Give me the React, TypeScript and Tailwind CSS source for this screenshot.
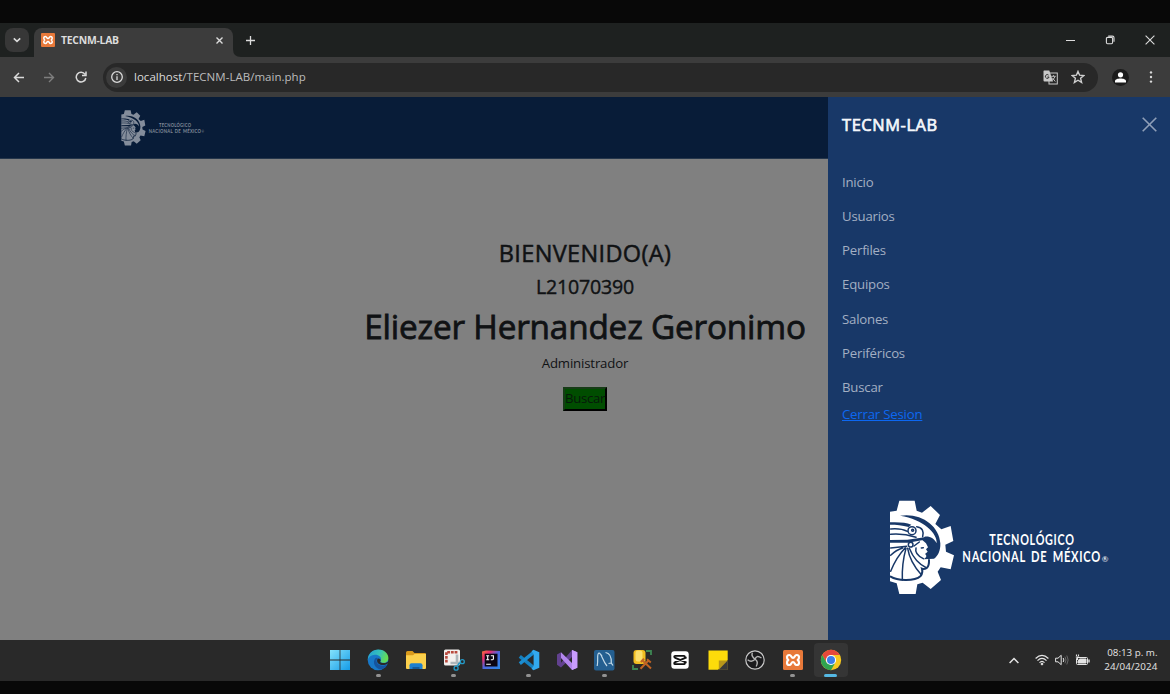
import type { ReactNode } from 'react';

function GearLogo({ className }: { className: string }) {
  return (
    <svg className={`overflow-visible ${className}`} viewBox="60 60 660 285" fill="none">
      <path
        fill="currentColor"
        d="M60 95 L80 92 L88 62 H134 L140 92 L156 98 L182 78 L210 105 L196 132 L214 148 L242 138 L250 183 L226 194 L228 215 L252 226 L242 268 L212 262 L203 275 L213 300 L182 327 L158 308 L142 313 L137 342 H88 L80 310 L60 304 Z"
      />
      <g className="fill-[var(--logo-bg)]">
        <path d="M90 107 C150 97 208 135 211 190 C212 212 203 230 192 236 L160 238 C172 232 170 226 165 222 L173 215 L168 208 L174 202 L168 190 L156 179 L164 170 C180 168 193 176 200 190 C203 160 160 118 90 107 Z" />
        <path d="M60 127 C90 126 108 128 124 134 L116 141 C96 135 80 134 60 134 Z" />
        <path d="M60 180 L112 179 L164 172 L164 179 L114 188 L60 188 Z" />
      </g>
      <g className="stroke-[var(--logo-bg)]" strokeWidth="4.5" strokeLinecap="round">
        <path d="M62 147 C85 145 100 148 112 154 M62 163 C85 161 110 163 138 172 M140 140 C158 142 162 155 158 170" />
        <circle cx="126" cy="152" r="12" />
        <circle cx="128" cy="151" r="3" />
        <circle cx="122" cy="194" r="7" />
        <path d="M132 198 L148 186 M138 204 C134 218 144 228 160 236 M154 204 L160 203" />
        <path d="M62 204 L110 199 M106 203 C88 222 72 248 62 274 M108 205 C98 240 96 270 97 300 M113 205 C118 236 134 262 154 284 M118 205 C128 230 148 254 170 264 M62 226 C72 216 84 208 98 204" />
        <path d="M62 290 C80 302 132 306 152 288 C158 280 158 272 156 266 C168 270 178 262 177 240" strokeWidth="6" />
      </g>
      <g fill="currentColor" fontFamily="Lato, sans-serif" fontWeight="700">
        <text x="358" y="194" fontSize="46" letterSpacing="3" textLength="256" lengthAdjust="spacingAndGlyphs">TECNOLÓGICO</text>
        <text x="277" y="245" fontSize="46" letterSpacing="3" wordSpacing="8" textLength="416" lengthAdjust="spacingAndGlyphs">NACIONAL DE MÉXICO</text>
        <text x="695" y="245" fontSize="24" fontWeight="400">®</text>
      </g>
    </svg>
  );
}

function Xampp({ className }: { className: string }) {
  return (
    <svg className={className} viewBox="0 0 20 20">
      <rect width="20" height="20" rx="1.5" fill="#e8793a" />
      <path
        d="M6.3 5 C3.4 5 3.4 8.6 5.3 10 C3.4 11.4 3.4 15 6.3 15 C8.6 15 8 12 10 12 C12 12 11.4 15 13.7 15 C16.6 15 16.6 11.4 14.7 10 C16.6 8.6 16.6 5 13.7 5 C11.4 5 12 8 10 8 C8 8 8.6 5 6.3 5 Z"
        fill="none"
        stroke="#fff"
        strokeWidth="2.2"
        strokeLinejoin="round"
      />
    </svg>
  );
}

function TaskSvg({ children }: { children: ReactNode }) {
  return (
    <svg className="h-[22px] w-[22px]" viewBox="0 0 22 22" fill="none">
      {children}
    </svg>
  );
}

const tasks: { name: string; state?: 'open' | 'active'; icon: ReactNode }[] = [
  {
    name: 'windows',
    icon: (
      <TaskSvg>
        <defs>
          <linearGradient id="win" x1="0" y1="0" x2="1" y2="1">
            <stop stopColor="#84e2fc" />
            <stop offset="1" stopColor="#149be6" />
          </linearGradient>
        </defs>
        <path fill="url(#win)" d="M1 1h9.6v9.6H1z M11.4 1H21v9.6h-9.6z M1 11.4h9.6V21H1z M11.4 11.4H21V21h-9.6z" />
      </TaskSvg>
    ),
  },
  {
    name: 'edge',
    state: 'open',
    icon: (
      <TaskSvg>
        <defs>
          <linearGradient id="edgeTop" x1="0" y1="0" x2="1" y2="0.3">
            <stop stopColor="#229bd8" />
            <stop offset="0.6" stopColor="#36c3b8" />
            <stop offset="1" stopColor="#64dc55" />
          </linearGradient>
        </defs>
        <circle cx="11" cy="11" r="10.3" fill="#1878c8" />
        <path fill="url(#edgeTop)" d="M.7 11 C1 4.5 6 .5 11.4 .6 C18 .8 21.6 5.2 21.4 9.4 C21.2 13 17.8 14.4 14.6 13.6 C13 13.2 13.2 12.3 13.8 11.4 C15 8.5 12 5.7 7.8 5.8 C4.3 5.9 1.5 8 .7 11 Z" />
        <path fill="#15549f" d="M8.3 9.3 C5 13.5 8.2 20 13.8 20.5 C16.8 20 19.4 18 20.3 15.6 C16.7 17.7 10.5 16.7 9.6 12.7 C9.3 11 10 9.8 11 9.2 C10.2 8.5 9 8.5 8.3 9.3 Z" />
        <path fill="#292929" d="M11 9.5 C9.6 10.7 9.7 13.2 11.6 14.7 C14.2 16.7 18 16.2 20.5 14.8 L21.8 12 C19.7 14.4 16.8 14.3 14.3 13.7 C13 13.3 13.1 12.4 13.7 11.4 C13.6 10.3 12.4 9.2 11 9.5 Z" />
      </TaskSvg>
    ),
  },
  {
    name: 'explorer',
    icon: (
      <TaskSvg>
        <path fill="#d99a1c" d="M1 3.5 Q1 2 2.5 2 H7.5 L9.5 4 H20 Q21 4 21 5 V12 H1 Z" />
        <path fill="#fbd04c" d="M1 6.2 H8 L9.5 5 H21 V19 Q21 20 20 20 H2 Q1 20 1 19 Z" />
        <path fill="#1d7fd0" d="M4.5 20 V16.2 Q4.5 14.2 6.5 14.2 H15.5 Q17.5 14.2 17.5 16.2 V20 Z" />
        <path fill="#145a9b" d="M7.5 18h7v2h-7z" />
      </TaskSvg>
    ),
  },
  {
    name: 'snip',
    state: 'open',
    icon: (
      <TaskSvg>
        <rect x="1" y=".5" width="16" height="16" rx="1.5" fill="#f3f0ee" />
        <path d="M3.4 13.5 V3.2 H14.5" stroke="#b8483c" strokeWidth="2.6" strokeDasharray="2.8 .9" />
        <path d="M14 5.5 V15.5 M7.5 14 H17.5" stroke="#aeb6ba" strokeWidth="2.6" />
        <circle cx="13.1" cy="19.2" r="2" stroke="#2499c6" strokeWidth="1.3" />
        <circle cx="19.3" cy="12.7" r="2" stroke="#2499c6" strokeWidth="1.3" />
        <path d="M14.2 17.5 L16 14.5 L18 14" stroke="#2499c6" strokeWidth="1.5" />
      </TaskSvg>
    ),
  },
  {
    name: 'intellij',
    icon: (
      <TaskSvg>
        <defs>
          <linearGradient id="ij" x1="0" y1="0" x2="1" y2="1">
            <stop stopColor="#f2783a" />
            <stop offset="0.25" stopColor="#ee2c6c" />
            <stop offset="0.5" stopColor="#4f66dc" />
            <stop offset="1" stopColor="#2a8be8" />
          </linearGradient>
        </defs>
        <path fill="url(#ij)" d="M2 2.5 L6 1.5 L20 2 V20 L2.5 20 Z" />
        <path fill="#0b0612" d="M4.7 4.7h12.8v12.8H4.7z" />
        <path stroke="#fff" strokeWidth="1.1" d="M6.2 6.8h3 M7.7 6.8v4 M6.2 10.8h3 M10.8 6.8h2.6 v3 Q13.2 10.8 12.2 10.8 H10.8 M6.2 15.3h4.6" />
      </TaskSvg>
    ),
  },
  {
    name: 'vscode',
    state: 'open',
    icon: (
      <TaskSvg>
        <path d="M1.8 7.4 L16 18.8" stroke="#1680bf" strokeWidth="3.4" />
        <path d="M1.8 14.6 L16 3.2" stroke="#1b8dd1" strokeWidth="3.4" />
        <path fill="#32a9ee" d="M15.5 .8 L21.3 3.3 V18.7 L15.5 21.2 L13.5 19.8 L15.6 17 V5 L13.5 2.2 Z" />
      </TaskSvg>
    ),
  },
  {
    name: 'visualstudio',
    icon: (
      <TaskSvg>
        <path fill="#62418f" d="M1 5.5 L5 3.3 V18.6 L1 15.8 Z" />
        <path fill="#62418f" d="M4 15 L16 1 V8 L5 18.6 Z" />
        <path fill="#b386ee" d="M5 3.3 L16 14 V1 L21.3 3.2 V18.8 L16 21 L5 9 Z" />
        <path fill="#ca9cff" d="M16 1 L21.3 3.2 V18.8 L16 21 Z" />
      </TaskSvg>
    ),
  },
  {
    name: 'mysql',
    state: 'open',
    icon: (
      <TaskSvg>
        <rect x="1" y="1" width="20.5" height="20.5" rx="2" fill="#245f90" />
        <path d="M4.2 17 C5.6 10 3.4 5 6 4 C8.5 4 9.5 12 14 17 M12.5 3.5 C16.5 4 18.5 8 18.3 14 L20 16.5 M15.5 14.5 L18.3 14 M6.5 4.2 L9 7" stroke="#c5dbe8" strokeWidth="1.2" />
      </TaskSvg>
    ),
  },
  {
    name: 'dbtools',
    icon: (
      <TaskSvg>
        <path d="M15 2h5v4 M2 16v4h5" stroke="#3d8753" strokeWidth="1.8" />
        <rect x="2.5" y="1" width="12" height="14" rx="3" fill="#f1bd20" />
        <rect x="4.5" y="1.5" width="7" height="11" rx="2.5" fill="#fbdf6c" />
        <path d="M9.5 19.8 L18 11 M11 11 L20 19.5 M9.8 13 L13 9.8 M16 10.3 L19.8 13.4" stroke="#c26423" strokeWidth="2" />
      </TaskSvg>
    ),
  },
  {
    name: 'capcut',
    icon: (
      <TaskSvg>
        <rect x="2.3" y="2.3" width="17.4" height="17.4" rx="3" fill="#fff" />
        <path d="M15.8 8.2 V7.4 Q15.8 6.8 15 6.8 H6.2 Q5.2 6.8 5.2 7.8 Q5.2 8.4 6.2 8.8 L17.6 13.6 M15.8 13.8 V14.6 Q15.8 15.2 15 15.2 H6.2 Q5.2 15.2 5.2 14.2 Q5.2 13.6 6.2 13.2 L17.6 8.4" stroke="#111" strokeWidth="1.8" />
      </TaskSvg>
    ),
  },
  {
    name: 'notes',
    icon: (
      <TaskSvg>
        <path fill="#fddb0b" d="M1.5 1.5h19.2v9.5L11 20.7H1.5z" />
        <path fill="#b8971a" d="M11.8 11.5H20.7V20.7H11.8z" />
        <path fill="#393939" d="M20.7 11.5V20.7H11.8z" />
      </TaskSvg>
    ),
  },
  {
    name: 'obs',
    icon: (
      <TaskSvg>
        <circle cx="11" cy="11" r="9.2" fill="#1b1b1d" stroke="#c8c8c8" strokeWidth="1.2" />
        <path d="M8.3 3.6 Q7 7.5 11.2 10.3 Q12 5.5 17.5 9 M11.2 10.3 Q14.8 12.3 12.2 17.5 M11.2 10.3 Q7.5 13.8 3.6 10.8" stroke="#b4b4b4" strokeWidth="1.4" />
      </TaskSvg>
    ),
  },
  { name: 'xampp', state: 'open', icon: <Xampp className="h-5 w-5" /> },
  {
    name: 'chrome',
    state: 'active',
    icon: (
      <TaskSvg>
        <circle cx="11" cy="11" r="10.2" fill="#f7c81e" />
        <path fill="#e5483b" d="M2.2 5.9 A10.2 10.2 0 0 1 19.8 5.9 H11 L6.6 13.5 Z" />
        <path fill="#30a350" d="M2.2 5.9 A10.2 10.2 0 0 0 11 21.2 L15.4 13.5 H6.6 Z" />
        <circle cx="11" cy="11" r="5.1" fill="#fff" />
        <circle cx="11" cy="11" r="4" fill="#3c7ee8" />
      </TaskSvg>
    ),
  },
];

const links = ['Inicio', 'Usuarios', 'Perfiles', 'Equipos', 'Salones', 'Periféricos', 'Buscar'];

function TabStrip() {
  return (
    <div className="flex h-[34px] items-stretch bg-[#1e2120] text-[#dcdcdc]">
      <div className="flex w-[34px] items-center pl-[5px]">
        <div className="flex h-6 w-6 items-center justify-center rounded-lg bg-[#373737]">
          <svg className="h-2 w-2" viewBox="0 0 8 8" fill="none" stroke="currentColor" strokeWidth="1.6">
            <path d="M.8 2.4 L4 5.4 L7.2 2.4" />
          </svg>
        </div>
      </div>
      <div className="mt-[5px] flex w-[199px] items-center rounded-t-lg bg-[#3c3c3c] pb-[5px] pl-[7px]">
        <Xampp className="h-[14px] w-[14px]" />
        <span className="ml-[6px] pt-px text-[10.4px] font-bold tracking-[-0.25px]">TECNM-LAB</span>
        <svg className="mr-[10px] ml-auto h-[7px] w-[7px]" viewBox="0 0 7 7" stroke="currentColor" strokeWidth="1.4">
          <path d="M.5 .5 L6.5 6.5 M6.5 .5 L.5 6.5" />
        </svg>
      </div>
      <svg className="h-[34px] w-2" viewBox="0 0 8 34">
        <path d="M0 26 Q0 34 8 34 H0 Z" fill="#3c3c3c" />
      </svg>
      <svg className="mt-[13px] ml-[5px] h-[9px] w-[9px]" viewBox="0 0 9 9" stroke="currentColor" strokeWidth="1.3">
        <path d="M4.5 0V9 M0 4.5H9" />
      </svg>
      <div className="mr-[15px] ml-auto flex items-center gap-[30px]">
        <svg className="h-[10px] w-[9px]" viewBox="0 0 9 10" stroke="currentColor">
          <path d="M0 5.5H9" />
        </svg>
        <svg className="h-[10px] w-[10px]" viewBox="0 0 10 10" fill="none" stroke="currentColor" strokeWidth="1.1">
          <rect x="1.4" y="2.4" width="6.2" height="6.4" rx="1.2" />
          <path d="M3.2 1.1 H7.4 Q9 1.1 9 2.7 V6.8" />
        </svg>
        <svg className="h-[10px] w-[10px]" viewBox="0 0 10 10" stroke="currentColor" strokeWidth="1.1">
          <path d="M.6 .6 L9.4 9.4 M9.4 .6 L.6 9.4" />
        </svg>
      </div>
    </div>
  );
}

function Toolbar() {
  return (
    <div className="flex h-10 items-center bg-[#3c3c3c] text-[#dadada]">
      <svg className="ml-[13px] h-[11px] w-[11px]" viewBox="0 0 11 11" fill="none" stroke="currentColor" strokeWidth="1.5">
        <path d="M11 5.5H1.5 M6 1 L1.5 5.5 L6 10" />
      </svg>
      <svg className="ml-5 h-[11px] w-[11px] text-[#7e7e7e]" viewBox="0 0 11 11" fill="none" stroke="currentColor" strokeWidth="1.4">
        <path d="M0 5.5H9.5 M5 1 L9.5 5.5 L5 10" />
      </svg>
      <svg className="ml-5 h-3 w-3" viewBox="0 0 12 12" fill="none" stroke="currentColor" strokeWidth="1.5">
        <path d="M10 3.4 A4.8 4.8 0 1 0 10.8 7 M11 .5 V4.5 H7" />
      </svg>
      <div className="ml-[16px] flex h-[29px] w-[995px] items-center rounded-full bg-[#282828] pl-[3px]">
        <div className="flex h-[21px] w-[21px] items-center justify-center rounded-full bg-[#3b3b3b]">
          <svg className="h-3 w-3" viewBox="0 0 12 12" fill="none" stroke="currentColor" strokeWidth="1.3">
            <circle cx="6" cy="6" r="5.3" />
            <path d="M6 5.2V9 M6 3V4.3" />
          </svg>
        </div>
        <span className="ml-[7px] text-[11.5px] leading-4 tracking-[0.02px]">
          localhost<span className="text-[#bcbcbc]">/TECNM-LAB/main.php</span>
        </span>
        <svg className="mr-[13px] ml-auto h-[15px] w-[15px]" viewBox="0 0 15 15" fill="none">
          <rect x="6" y="3" width="8.3" height="11" stroke="#c9c9c9" />
          <path fill="#c9c9c9" d="M1 .5 H6.3 L10 11.5 H1.5 Q.5 11.5 .5 10.5 V1 Z" />
          <path d="M5.6 5.1 A1.9 1.9 0 1 0 6.1 7 H4.4" stroke="#282828" strokeWidth=".9" />
          <path d="M8.2 6.3h4.5 M10.5 5.2v1 M12 6.5 Q11.3 9 9 10.3 M9.3 7.8 L12.3 11.5" stroke="#c9c9c9" strokeWidth=".9" />
        </svg>
        <svg className="mr-[13px] h-[14px] w-[14px]" viewBox="0 0 14 14" fill="none" stroke="#cfcfcf" strokeWidth="1.4">
          <path d="M7 1.4 L8.6 5.2 L12.8 5.6 L9.6 8.3 L10.6 12.4 L7 10.2 L3.4 12.4 L4.4 8.3 L1.2 5.6 L5.4 5.2 Z" />
        </svg>
      </div>
      <div className="ml-[14px] flex h-[17px] w-[17px] items-center justify-center rounded-full bg-[#1c1c1c]">
        <svg className="h-[11px] w-[11px] text-white" viewBox="0 0 11 11" fill="currentColor">
          <circle cx="5.5" cy="2.8" r="2.6" />
          <path d="M0 10.5 V9 C0 5.6 11 5.6 11 9 V10.5 Z" />
        </svg>
      </div>
      <svg className="ml-[20px] h-3 w-[4px]" viewBox="0 0 4 12" fill="currentColor">
        <circle cx="2" cy="1.4" r="1.2" />
        <circle cx="2" cy="6" r="1.2" />
        <circle cx="2" cy="10.6" r="1.2" />
      </svg>
    </div>
  );
}

function MainPage() {
  return (
    <div className="relative h-[543px] bg-[#808080]">
      <nav className="flex h-[62px] items-center border-b border-[#25364b] bg-[#081c38] pl-[121px]">
        <GearLogo className="h-[36px] w-[84px] text-[#848d9b] [--logo-bg:#081c38]" />
      </nav>
      <main className="flex flex-col items-center text-[#101214]">
        <h2 className="mt-[79px] text-[23.5px] leading-[30px] tracking-[0.35px] [-webkit-text-stroke:0.5px]">BIENVENIDO(A)</h2>
        <h3 className="mt-[6px] text-[19.6px] leading-[26px] tracking-[-0.2px] [-webkit-text-stroke:0.4px]">L21070390</h3>
        <h1 className="mt-[5px] text-[33.3px] leading-[42px] tracking-[-0.18px] [-webkit-text-stroke:0.8px]">Eliezer Hernandez Geronimo</h1>
        <p className="mt-[6px] text-[13.2px] leading-5 tracking-[-0.15px]">Administrador</p>
        <button className="mt-[14px] flex h-6 w-11 items-center justify-center border-2 border-t-[#173c17] border-r-black border-b-black border-l-[#173c17] bg-[#004d00] text-[13.2px] tracking-[-0.3px] text-[#07180a]">
          Buscar
        </button>
      </main>
      <aside className="absolute top-0 right-0 h-full w-[342px] bg-[#183868] pr-[13px] pl-[14px]">
        <header className="flex h-[55px] items-center justify-between text-[#f4f7fb]">
          <h5 className="pt-px text-[16.4px] tracking-[0.6px] [-webkit-text-stroke:0.7px]">TECNM-LAB</h5>
          <svg className="h-[15px] w-[15px] text-[#8f9fb8]" viewBox="0 0 15 15" stroke="currentColor" strokeWidth="1.6">
            <path d="M.7 .7 L14.3 14.3 M14.3 .7 L.7 14.3" />
          </svg>
        </header>
        <ul className="mt-[13.4px] text-[13.2px] tracking-[-0.2px] text-[#a3afc3]">
          {links.map((link) => (
            <li key={link} className="flex h-[34.25px] items-center">
              {link}
            </li>
          ))}
        </ul>
        <a className="-mt-px block text-[13.2px] leading-5 tracking-[-0.2px] text-[#0d68f2] underline">Cerrar Sesion</a>
        <GearLogo className="mt-[76px] ml-12 h-[95px] w-[220px] text-white [--logo-bg:#183868]" />
      </aside>
    </div>
  );
}

function Taskbar() {
  return (
    <div className="flex h-[41px] bg-[#292929] pl-[321.5px] text-[#e4e4e4]">
      {tasks.map(({ name, state, icon }) => (
        <div key={name} className="flex w-[37.72px] justify-center pt-[3px]">
          <div className={`flex h-[34px] w-[34px] flex-col items-center justify-between rounded ${state === 'active' ? 'bg-[#353535]' : ''}`}>
            <div className="mt-[6px] flex h-[22px] items-center">{icon}</div>
            <div className={`h-[3px] rounded-full ${state === 'active' ? 'w-[13px] bg-[#55b8e3]' : state === 'open' ? 'w-[5px] bg-[#929292]' : 'w-0'}`} />
          </div>
        </div>
      ))}
      <div className="mr-[12.5px] ml-auto flex items-center pb-px">
        <svg className="mr-[16px] h-[7px] w-[10px]" viewBox="0 0 10 7" fill="none" stroke="currentColor" strokeWidth="1.5">
          <path d="M.6 6 L5 1.5 L9.4 6" />
        </svg>
        <svg className="mr-[6px] h-[12px] w-[14px]" viewBox="0 0 14 12" fill="none" stroke="currentColor">
          <path d="M.6 4.5 Q7 -1.6 13.4 4.5 M2.5 6.6 Q7 2.2 11.5 6.6 M4.5 8.7 Q7 6 9.5 8.7" strokeWidth="1.2" />
          <circle cx="7" cy="10" r=".9" fill="currentColor" />
        </svg>
        <svg className="mr-[6px] h-[12px] w-[14px]" viewBox="0 0 14 12" fill="none" stroke="currentColor">
          <path d="M.6 4.2 H3 L6.2 1.3 V10.7 L3 7.8 H.6 Z M8.2 4 Q9.5 6 8.2 8" />
          <path d="M10 2.7 Q12 6 10 9.3 M11.8 1.5 Q14.5 6 11.8 10.5" stroke="#676767" />
        </svg>
        <svg className="mr-[13px] h-[12px] w-[15px]" viewBox="0 0 15 12" fill="none" stroke="currentColor">
          <rect x="1.5" y="3.5" width="11" height="7" rx="1" />
          <path d="M4.5 5h6.5v4H3V7z" fill="currentColor" />
          <path d="M14 5.5v3" strokeWidth="1.4" />
          <path d="M1.5 .5 V2 M3.5 .5 V2 M.8 3 H4.2 M2.5 3 V6" strokeWidth="1.1" />
        </svg>
        <div className="w-[55px] text-right text-[9.8px] leading-[14px] whitespace-nowrap">
          <div>08:13 p. m.</div>
          <div className="tracking-[0.12px]">24/04/2024</div>
        </div>
      </div>
    </div>
  );
}

export default function App() {
  return (
    <div className="flex h-[694px] w-[1170px] flex-col overflow-hidden bg-[#080808] pt-[23px] font-['Open_Sans','Noto_Sans',sans-serif]">
      <TabStrip />
      <Toolbar />
      <MainPage />
      <Taskbar />
    </div>
  );
}
